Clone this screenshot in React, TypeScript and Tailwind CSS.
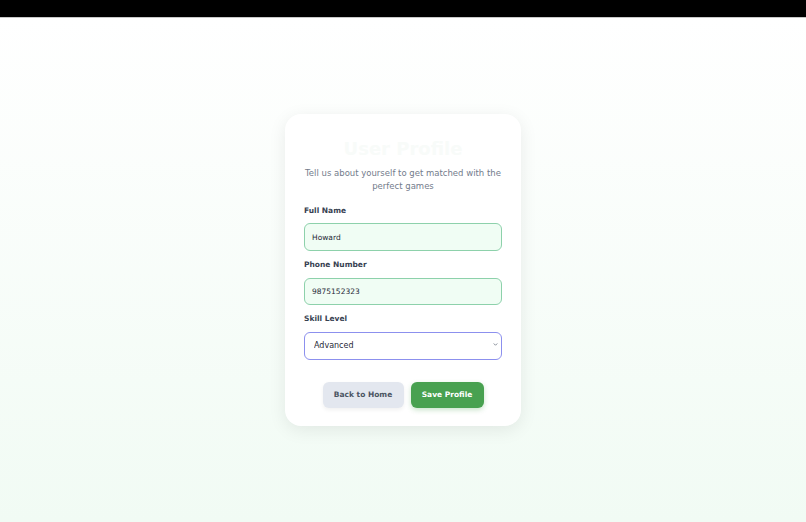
import { useState } from 'react';

const font = { fontFamily: '"DejaVu Sans", "Noto Sans", sans-serif' };

export default function App() {
    const [name, setName] = useState('Howard');
    const [phone, setPhone] = useState('9875152323');
    const [skill, setSkill] = useState('Advanced');

    return (
        <div className="min-h-screen flex flex-col" style={font}>
            {/* top bar */}
            <div className="h-[18px] bg-black border-b border-[#c8c8c8]"></div>

            <main className="flex-1 flex items-center justify-center bg-gradient-to-b from-white to-[#f1fbf4]">
                <div className="w-[236px] bg-white rounded-2xl shadow-[0_4px_18px_rgba(0,0,0,0.08)] px-[19px] pt-[25px] pb-[18px]">
                    <h1 className="text-center text-[18px] leading-[20px] font-semibold text-[#f8fbf9]">User Profile</h1>
                    <p className="mt-[8px] text-center text-[8.5px] leading-[12.5px] text-[#737c8c]">
                        Tell us about yourself to get matched with the perfect games
                    </p>

                    {/* Full name */}
                    <label className="block mt-[14px] text-[7.5px] leading-[10px] font-semibold text-[#374151]">Full Name</label>
                    <input
                        value={name}
                        onChange={(e) => setName(e.target.value)}
                        className="mt-[7px] w-full h-[28px] px-[7px] rounded-md border-[1.5px] border-[#8dd1ab] bg-[#f0fdf4] text-[7.5px] text-[#1f2937] outline-none"
                    />

                    {/* Phone */}
                    <label className="block mt-[9px] text-[7.5px] leading-[10px] font-semibold text-[#374151]">Phone Number</label>
                    <input
                        value={phone}
                        onChange={(e) => setPhone(e.target.value)}
                        className="mt-[8px] w-full h-[27px] px-[7px] rounded-md border-[1.5px] border-[#8dd1ab] bg-[#f0fdf4] text-[7.5px] text-[#1f2937] outline-none"
                    />

                    {/* Skill */}
                    <label className="block mt-[9px] text-[7.5px] leading-[10px] font-semibold text-[#374151]">Skill Level</label>
                    <div className="relative mt-[7px]">
                        <select
                            value={skill}
                            onChange={(e) => setSkill(e.target.value)}
                            className="appearance-none w-full h-[28px] pl-[9px] pr-5 rounded-md border-[1.5px] border-[#8c90ee] bg-white text-[8px] text-[#1f2937] outline-none"
                        >
                            <option>Beginner</option>
                            <option>Intermediate</option>
                            <option>Advanced</option>
                        </select>
                        <svg className="absolute right-[4px] top-[11px] w-[5px] h-[5px] text-[#6b7280]" viewBox="0 0 10 10" fill="none" stroke="currentColor" strokeWidth={1.6}>
                            <path d="M2 3.5l3 3 3-3" strokeLinecap="round" strokeLinejoin="round" />
                        </svg>
                    </div>

                    {/* buttons */}
                    <div className="mt-[22px] flex justify-center gap-[7px]">
                        <button className="w-[81px] h-[26px] rounded-md bg-[#e3e7ef] text-[#4b5563] text-[7.5px] font-semibold shadow-[0_2px_4px_rgba(0,0,0,0.06)]">
                            Back to Home
                        </button>
                        <button className="w-[73px] h-[26px] rounded-md bg-[#48a150] text-white text-[7.5px] font-semibold shadow-[0_2px_5px_rgba(72,161,80,0.3)]">
                            Save Profile
                        </button>
                    </div>
                </div>
            </main>
        </div>
    );
}
